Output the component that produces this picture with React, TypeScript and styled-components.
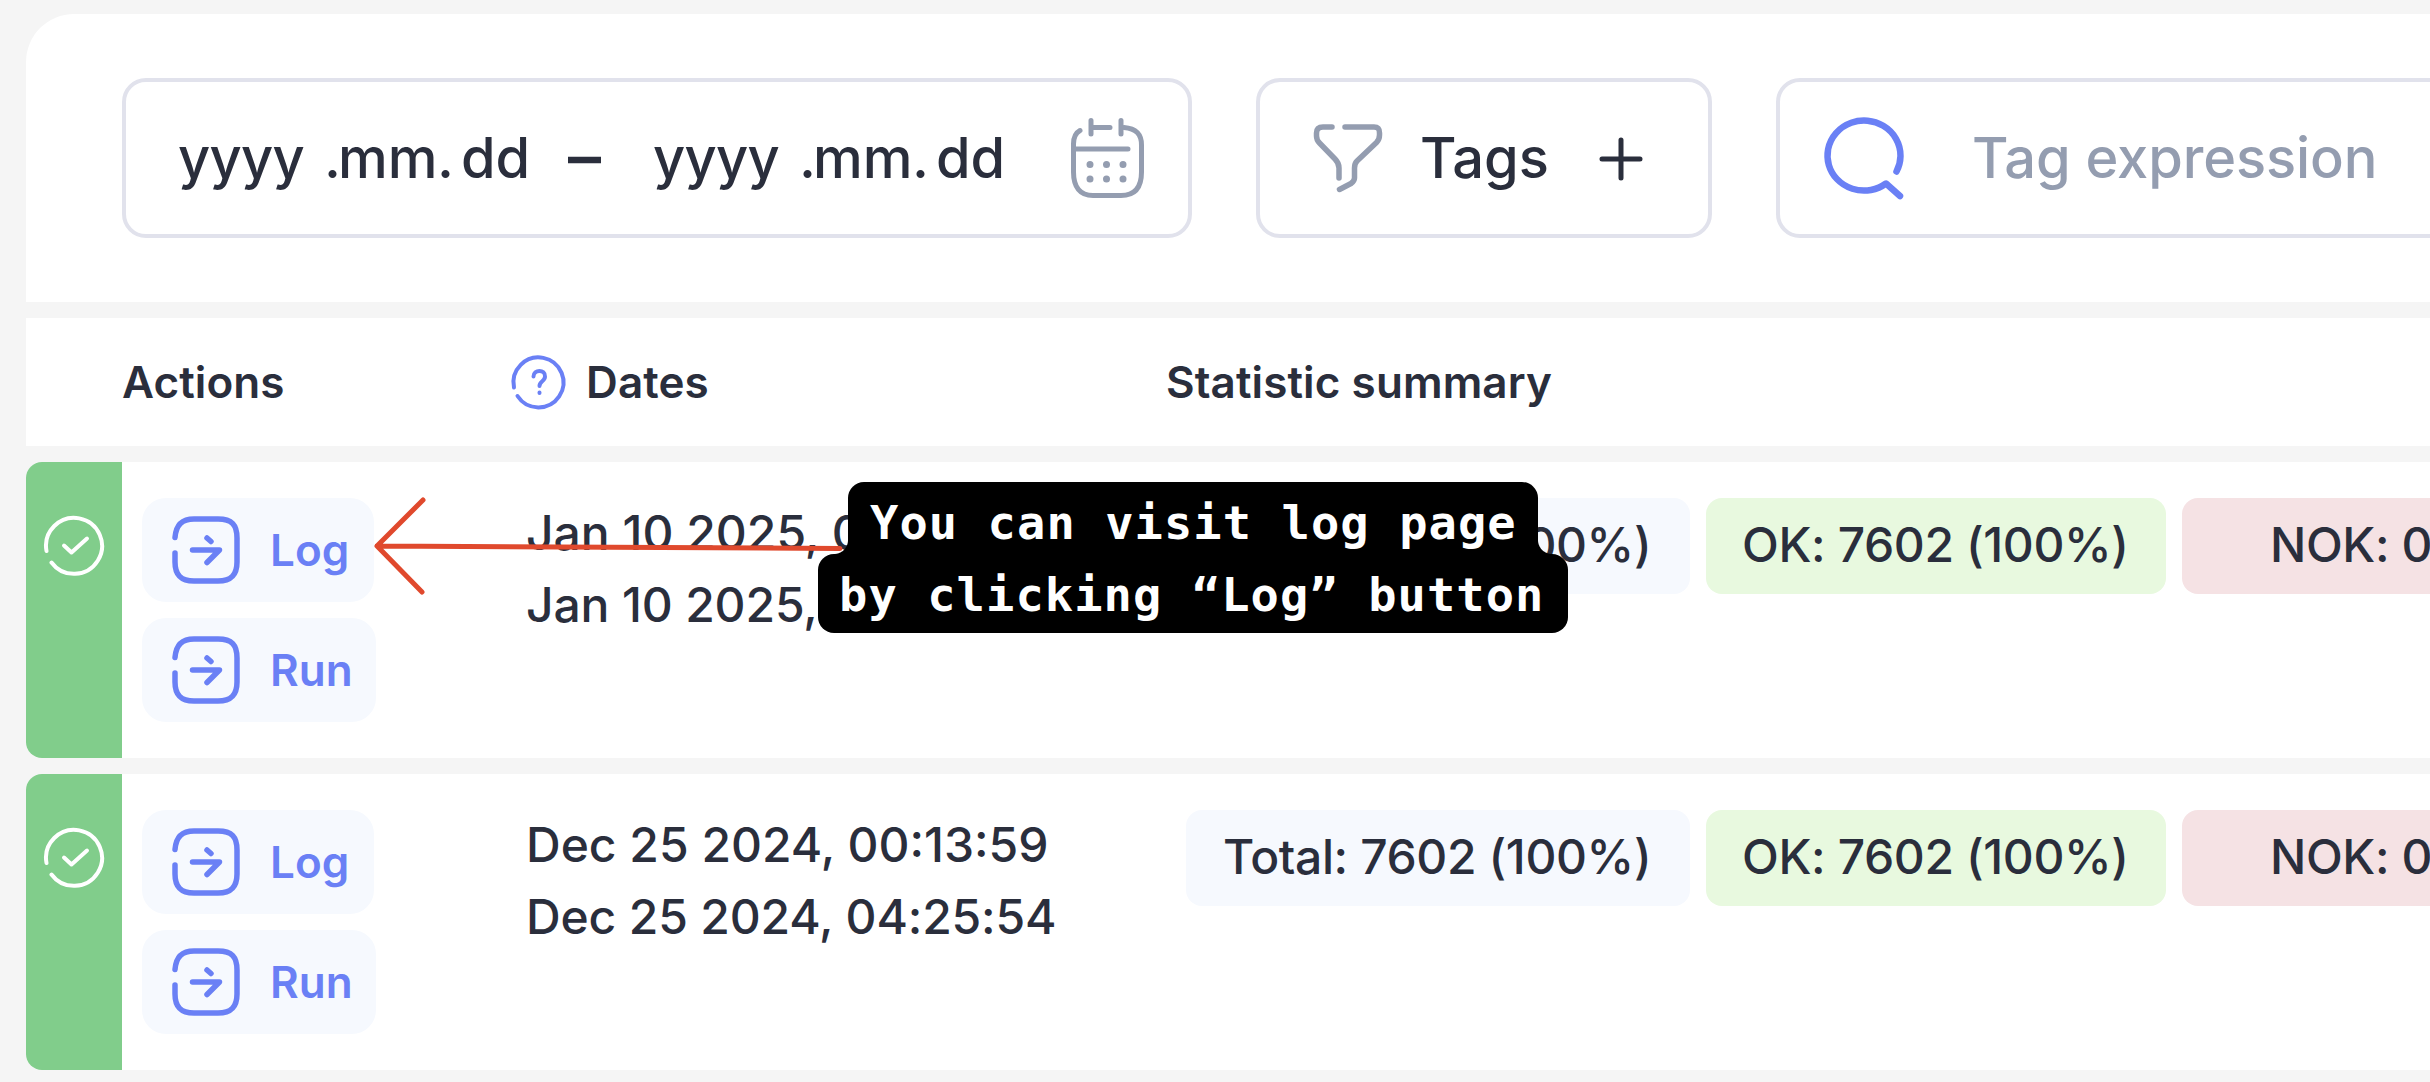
import React from "react";
import styled, { createGlobalStyle } from "styled-components";

const ink = "#2a2e3c";
const accent = "#6a80f5";
const muted = "#949db0";
const line = "#e1e2ec";

const GlobalStyle = createGlobalStyle`
  * { box-sizing: border-box; }
  body {
    margin: 0;
    overflow: hidden;
    background: #f5f5f5;
    color: ${ink};
    font-family: Inter, "Liberation Sans", sans-serif;
  }
`;

const Page = styled.main`
  position: relative;
  width: 2430px;
  height: 1082px;
  padding: 14px 0 0 26px;
  overflow: hidden;
  display: flex;
  flex-direction: column;
  gap: 16px;
`;

const Toolbar = styled.header`
  display: flex;
  gap: 64px;
  height: 288px;
  padding: 64px 0 64px 96px;
  background: #fff;
  border-top-left-radius: 48px;
`;

const Field = styled.div<{ $width: number; $pad: number }>`
  display: flex;
  align-items: center;
  flex: none;
  width: ${(p) => p.$width}px;
  height: 160px;
  padding-left: ${(p) => p.$pad}px;
  border: 4px solid ${line};
  border-radius: 24px;
  background: #fff;
  font-size: 56px;
  font-weight: 500;
  line-height: 80px;
  white-space: nowrap;
`;

const Segment = styled.span<{ $width: number; $spacing?: number }>`
  flex: none;
  width: ${(p) => p.$width}px;
  letter-spacing: ${(p) => p.$spacing ?? 0}px;
`;

const FieldIcon = styled.svg`
  flex: none;
  width: 80px;
  height: 80px;
  fill: none;
  stroke: currentColor;
  stroke-linecap: round;
  stroke-linejoin: round;
`;

const CalendarIcon = styled(FieldIcon)`
  margin-left: 62px;
  color: ${muted};
`;

const FunnelIcon = styled(FieldIcon)`
  color: ${muted};
`;

const PlusIcon = styled(FieldIcon)`
  margin-left: 32px;
`;

const TagsLabel = styled.span`
  width: 128px;
  margin-left: 32px;
  letter-spacing: -0.1px;
`;

const SearchIcon = styled(FieldIcon)`
  width: 88px;
  height: 88px;
  color: ${accent};
`;

const Dash = styled.svg`
  display: block;
  width: 80px;
  height: 80px;
  margin-left: 30px;
`;

const Placeholder = styled.span`
  margin-left: 64px;
  color: ${muted};
  font-weight: 450;
  letter-spacing: -0.1px;
`;

const HeaderRow = styled.div`
  display: grid;
  grid-template-columns: 387px 657px 1fr;
  align-items: center;
  height: 128px;
  padding-left: 96px;
  background: #fff;
  font-size: 44px;
  font-weight: 600;
  letter-spacing: 0.1px;
  white-space: nowrap;
`;

const HeaderCell = styled.div`
  display: flex;
  align-items: center;
  gap: 17px;
`;

const HelpIcon = styled.svg`
  width: 60px;
  height: 60px;
  fill: none;
  stroke: ${accent};
  stroke-width: 4;
  stroke-linecap: round;
  stroke-linejoin: round;
`;

const Row = styled.section`
  display: grid;
  grid-template-columns: 96px 404px 660px 1fr;
  height: 296px;
  background: #fff;
  border-radius: 16px 0 0 16px;
  overflow: hidden;
  white-space: nowrap;
`;

const Status = styled.div`
  display: flex;
  justify-content: center;
  align-items: flex-start;
  padding-top: 52px;
  background: #81cd8b;
`;

const StatusIcon = styled.svg`
  width: 64px;
  height: 64px;
  fill: none;
  stroke: #fff;
  stroke-width: 4;
  stroke-linecap: round;
  stroke-linejoin: round;
`;

const Actions = styled.div`
  display: flex;
  flex-direction: column;
  align-items: flex-start;
  gap: 16px;
  padding: 36px 20px;
`;

const ActionButton = styled.button<{ $width: number }>`
  display: flex;
  align-items: center;
  gap: 28px;
  width: ${(p) => p.$width}px;
  height: 104px;
  padding: 0 0 0 28px;
  border: 0;
  border-radius: 24px;
  background: #f6f9fe;
  color: ${accent};
  font: 600 44px Inter, "Liberation Sans", sans-serif;
`;

const ActionIcon = styled.svg`
  width: 72px;
  height: 72px;
  fill: none;
  stroke: ${accent};
  stroke-width: 5.5;
  stroke-linecap: round;
  stroke-linejoin: round;
`;

const Dates = styled.div`
  padding-top: 35px;
  font-size: 48px;
  font-weight: 450;
  line-height: 72px;
`;

const DateLine = styled.div<{ $spacing?: number }>`
  letter-spacing: ${(p) => p.$spacing ?? 0}px;
`;

const Stats = styled.div`
  display: flex;
  gap: 16px;
  padding-top: 36px;
`;

const Badge = styled.div<{ $tone: string; $width: number; $pad: number }>`
  display: flex;
  align-items: center;
  flex: none;
  width: ${(p) => p.$width}px;
  height: 96px;
  padding: 0 0 3px ${(p) => p.$pad}px;
  border-radius: 16px;
  background: ${(p) => p.$tone};
  font-size: 48px;
  font-weight: 450;
  letter-spacing: -0.38px;
`;

const Arrow = styled.svg`
  position: absolute;
  left: 370px;
  top: 490px;
  width: 480px;
  height: 110px;
  fill: none;
  stroke: #e0492d;
  stroke-width: 5;
  stroke-linecap: round;
  stroke-linejoin: round;
`;

const Note = styled.aside`
  position: absolute;
  left: 818px;
  top: 482px;
  width: 750px;
  display: flex;
  flex-direction: column;
  align-items: center;
  color: #fff;
  font: 700 47px "DejaVu Sans Mono", "Liberation Mono", monospace;
  letter-spacing: 1.1px;
  white-space: pre;
`;

const NoteTop = styled.div`
  position: relative;
  width: 690px;
  height: 72px;
  padding-left: 22px;
  line-height: 81px;
  background: #000;
  border-radius: 16px 16px 0 0;

  &::before,
  &::after {
    content: "";
    position: absolute;
    bottom: 0;
    width: 14px;
    height: 14px;
  }
  &::before {
    left: -14px;
    background: radial-gradient(circle at 0 0, transparent 13.5px, #000 14.5px);
  }
  &::after {
    right: -14px;
    background: radial-gradient(circle at 100% 0, transparent 13.5px, #000 14.5px);
  }
`;

const NoteBottom = styled.div`
  width: 750px;
  height: 79px;
  padding-left: 21px;
  line-height: 81px;
  background: #000;
  border-radius: 16px;
`;

const DateValue = () => (
  <>
    <Segment $width={146} $spacing={-0.7}>yyyy</Segment>
    <Segment $width={14}>.</Segment>
    <Segment $width={99}>mm</Segment>
    <Segment $width={24}>.</Segment>
    <Segment $width={69}>dd</Segment>
  </>
);

const ActionLink = ({ label, width }: { label: string; width: number }) => (
  <ActionButton $width={width}>
    <ActionIcon viewBox="0 0 72 72">
      <path d="M5 23.5C6 11 12 5 24 5H48C62 5 67 11 67 24V48C67 61 61 67 48 67H24C11 67 5 61 5 48V39" />
      <path d="M22.500 36H49.500L37 48.500M37 24L41 27.500" />
    </ActionIcon>
    {label}
  </ActionButton>
);

const runs = [
  ["Jan 10 2025, 00:14:02", "Jan 10 2025, 04:26:10"],
  ["Dec 25 2024, 00:13:59", "Dec 25 2024, 04:25:54"],
];

export default function App() {
  return (
    <Page>
      <GlobalStyle />
      <Toolbar>
        <Field $width={1070} $pad={52}>
          <DateValue />
          <Segment $width={123}>
            <Dash viewBox="0 0 80 80">
              <path d="M8 42H41" stroke={ink} strokeWidth="6.5" />
            </Dash>
          </Segment>
          <DateValue />
          <CalendarIcon viewBox="0 0 80 80" strokeWidth="5">
            <path d="M13 12.500C8.500 15 6.500 20 6.500 26V54C6.500 69 13 77.500 26 77.500H54C68 77.500 74.500 69 74.500 54V27C74.500 16 69 10.500 57 9.500" />
            <path d="M24 2.500V16M54 2.500V16M24 9.500H43M8 31H61" />
            <path d="M23 46.500h.01M39.500 46.500h.01M56 46.500h.01M23 61h.01M39.500 61h.01M56 61h.01" strokeWidth="7" />
          </CalendarIcon>
        </Field>
        <Field $width={456} $pad={48}>
          <FunnelIcon viewBox="0 0 80 80" strokeWidth="5.5">
            <path d="M24 9H15C10.500 9 8.500 11 8.500 15V18C8.500 21 9.500 23 11.500 25L27 41C30 44 31 46 31 50V60" />
            <path d="M37 9H66C70 9 71.500 11 71.500 15V17C71.500 20 71 22 68.500 24.500L49 43C47 45 46.500 47 46.500 50V60C46.500 62.500 45 64 43 65.500L31.500 71.500" />
          </FunnelIcon>
          <TagsLabel>Tags</TagsLabel>
          <PlusIcon viewBox="0 0 80 80" strokeWidth="5">
            <path d="M22 41H60M41 22V60" />
          </PlusIcon>
        </Field>
        <Field $width={900} $pad={40}>
          <SearchIcon viewBox="-1 -6 88 88" strokeWidth="6.500">
            <path d="M75.500 51.500A36.500 35 0 1 0 65 63.500L79 76" />
          </SearchIcon>
          <Placeholder>Tag expression</Placeholder>
        </Field>
      </Toolbar>

      <HeaderRow>
        <HeaderCell>Actions</HeaderCell>
        <HeaderCell>
          <HelpIcon viewBox="0 0 60 60">
            <path d="M5 35.500A25 25 0 1 1 8.500 44" />
            <path d="M24.500 24.500C24.500 17 36.500 17 36 24.500C36 29.500 30.500 29 30.500 34M30.500 40.500V41" />
          </HelpIcon>
          Dates
        </HeaderCell>
        <HeaderCell>Statistic summary</HeaderCell>
      </HeaderRow>

      {runs.map(([start, end]) => (
        <Row key={start}>
          <Status>
            <StatusIcon viewBox="0 0 64 64">
              <path d="M4.500 37A28 28 0 1 1 9.500 48.500" />
              <path d="M22 31.500L29.500 38.500L45 24.500" />
            </StatusIcon>
          </Status>
          <Actions>
            <ActionLink label="Log" width={232} />
            <ActionLink label="Run" width={234} />
          </Actions>
          <Dates>
            <DateLine>{start}</DateLine>
            <DateLine $spacing={-0.15}>{end}</DateLine>
          </Dates>
          <Stats>
            <Badge $tone="#f6f9fe" $width={504} $pad={37}>Total: 7602 (100%)</Badge>
            <Badge $tone="#e8f9df" $width={460} $pad={36}>OK: 7602 (100%)</Badge>
            <Badge $tone="#f5e2e4" $width={460} $pad={88}>NOK: 0 (0%)</Badge>
          </Stats>
        </Row>
      ))}

      <Arrow viewBox="370 490 480 110">
        <path d="M423 500L377 546L422 592M377 546L840 548.500" />
      </Arrow>
      <Note>
        <NoteTop>You can visit log page</NoteTop>
        <NoteBottom>by clicking “Log” button</NoteBottom>
      </Note>
    </Page>
  );
}
